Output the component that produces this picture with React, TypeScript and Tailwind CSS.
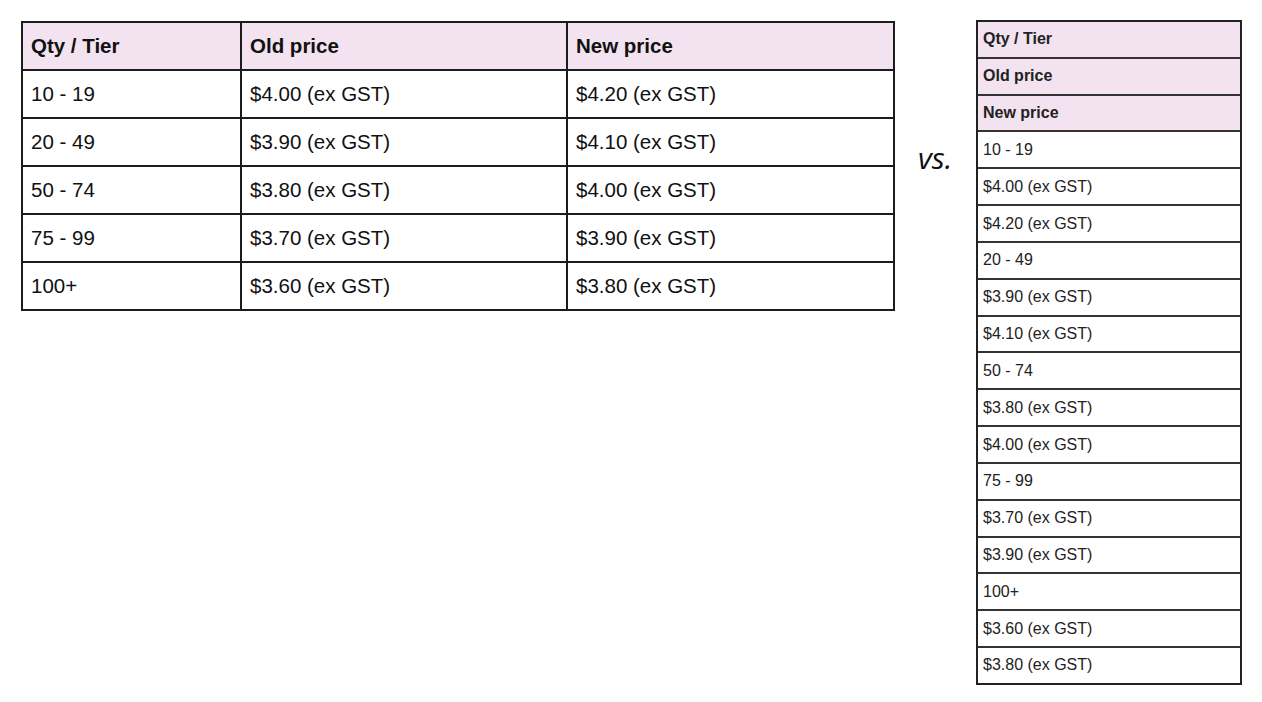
import React from "react";

const rows = [
  ["10 - 19", "$4.00 (ex GST)", "$4.20 (ex GST)"],
  ["20 - 49", "$3.90 (ex GST)", "$4.10 (ex GST)"],
  ["50 - 74", "$3.80 (ex GST)", "$4.00 (ex GST)"],
  ["75 - 99", "$3.70 (ex GST)", "$3.90 (ex GST)"],
  ["100+", "$3.60 (ex GST)", "$3.80 (ex GST)"],
];

const headers = ["Qty / Tier", "Old price", "New price"];

export default function App() {
  const stacked: { text: string; head: boolean }[] = [
    ...headers.map((h) => ({ text: h, head: true })),
    ...rows.flat().map((t) => ({ text: t, head: false })),
  ];
  return (
    <div
      className="w-[1262px] h-[702px] bg-white flex items-start pt-[20px] pl-[21px]"
      style={{ fontFamily: '"Liberation Sans", Arial, sans-serif' }}
    >
      {/* Wide table */}
      <div className="mt-[1px] w-[874px] border-2 border-[#1c1c1c] text-[20.5px] text-[#111]">
        <div className="grid grid-cols-[217px_326px_327px] h-[46px] bg-[#f3e3f0] font-bold">
          {headers.map((h, i) => (
            <div
              key={h}
              className={`flex items-center ${i > 0 ? "pl-[8px] border-l-2 border-[#1c1c1c]" : "pl-[8px]"}`}
            >
              {h}
            </div>
          ))}
        </div>
        {rows.map((r) => (
          <div
            key={r[0]}
            className="grid grid-cols-[217px_326px_327px] h-[48px] border-t-2 border-[#1c1c1c]"
          >
            {r.map((c, i) => (
              <div
                key={i}
                className={`flex items-center ${i > 0 ? "pl-[8px] border-l-2 border-[#1c1c1c]" : "pl-[8px]"}`}
              >
                {c}
              </div>
            ))}
          </div>
        ))}
      </div>

      {/* vs. */}
      <div className="w-[81px] pl-[23px] pt-[123px]">
        <span
          className="italic text-[30px] leading-none text-[#111]"
          style={{ fontFamily: '"Open Sans", sans-serif' }}
        >
          vs.
        </span>
      </div>

      {/* Stacked table */}
      <div className="w-[266px] h-[665px] border-2 border-[#222] flex flex-col text-[16px] text-[#222]">
        {stacked.map((c, i) => (
          <div
            key={i}
            className={`flex-1 flex items-center pl-[5px] ${i > 0 ? "border-t-2 border-[#333]" : ""} ${
              c.head ? "bg-[#f3e3f0] font-bold" : "bg-white"
            }`}
          >
            {c.text}
          </div>
        ))}
      </div>
    </div>
  );
}
